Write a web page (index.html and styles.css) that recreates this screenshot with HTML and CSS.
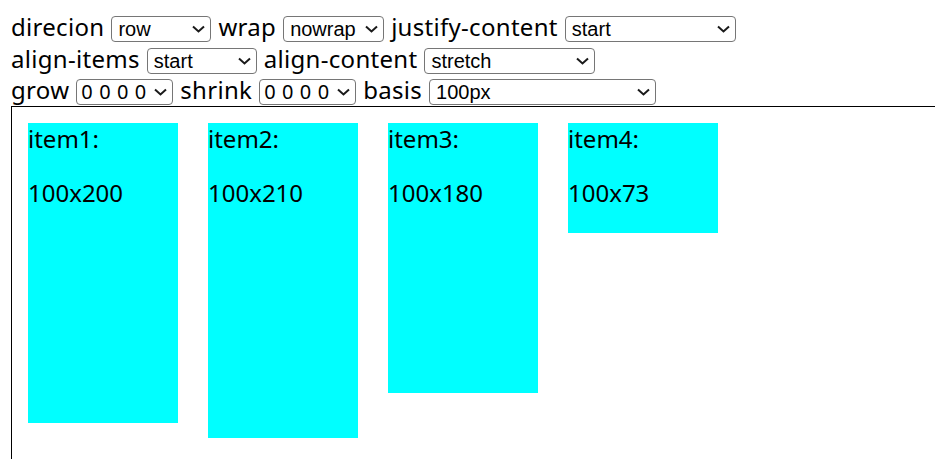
FILE: index.html
```html
<!DOCTYPE html>
<html>
<head>
<meta charset="utf-8">
<link rel="stylesheet" href="styles.css">
</head>
<body>
<div class="controls">
  <div class="row">
    <span class="label">direcion</span>
    <span class="selwrap"><select class="sel w100"><option>row</option></select><svg class="chev" width="13" height="8" viewBox="0 0 13 8"><path d="M1 1.5 L6.5 6.5 L12 1.5" fill="none" stroke="#1a1a1a" stroke-width="2"/></svg></span>
    <span class="label">wrap</span>
    <span class="selwrap"><select class="sel w101"><option>nowrap</option></select><svg class="chev" width="13" height="8" viewBox="0 0 13 8"><path d="M1 1.5 L6.5 6.5 L12 1.5" fill="none" stroke="#1a1a1a" stroke-width="2"/></svg></span>
    <span class="label">justify-content</span>
    <span class="selwrap"><select class="sel w171"><option>start</option></select><svg class="chev" width="13" height="8" viewBox="0 0 13 8"><path d="M1 1.5 L6.5 6.5 L12 1.5" fill="none" stroke="#1a1a1a" stroke-width="2"/></svg></span>
  </div>
  <div class="row">
    <span class="label">align-items</span>
    <span class="selwrap"><select class="sel w110"><option>start</option></select><svg class="chev" width="13" height="8" viewBox="0 0 13 8"><path d="M1 1.5 L6.5 6.5 L12 1.5" fill="none" stroke="#1a1a1a" stroke-width="2"/></svg></span>
    <span class="label">align-content</span>
    <span class="selwrap"><select class="sel w171"><option>stretch</option></select><svg class="chev" width="13" height="8" viewBox="0 0 13 8"><path d="M1 1.5 L6.5 6.5 L12 1.5" fill="none" stroke="#1a1a1a" stroke-width="2"/></svg></span>
  </div>
  <div class="row">
    <span class="label">grow</span>
    <span class="selwrap"><select class="sel w97 digits"><option>0 0 0 0</option></select><svg class="chev" width="13" height="8" viewBox="0 0 13 8"><path d="M1 1.5 L6.5 6.5 L12 1.5" fill="none" stroke="#1a1a1a" stroke-width="2"/></svg></span>
    <span class="label">shrink</span>
    <span class="selwrap"><select class="sel w97 digits"><option>0 0 0 0</option></select><svg class="chev" width="13" height="8" viewBox="0 0 13 8"><path d="M1 1.5 L6.5 6.5 L12 1.5" fill="none" stroke="#1a1a1a" stroke-width="2"/></svg></span>
    <span class="label">basis</span>
    <span class="selwrap"><select class="sel w227"><option>100px</option></select><svg class="chev" width="13" height="8" viewBox="0 0 13 8"><path d="M1 1.5 L6.5 6.5 L12 1.5" fill="none" stroke="#1a1a1a" stroke-width="2"/></svg></span>
  </div>
</div>
<div class="box">
  <div class="item h300"><div class="name">item1:</div><div class="size">100x200</div></div>
  <div class="item h315"><div class="name">item2:</div><div class="size">100x210</div></div>
  <div class="item h270"><div class="name">item3:</div><div class="size">100x180</div></div>
  <div class="item h110"><div class="name">item4:</div><div class="size">100x73</div></div>
</div>
</body>
</html>
```

FILE: styles.css
```css
html, body {
  margin: 0;
  padding: 0;
  height: 100%;
  overflow: hidden;
  background: #fff;
}
body {
  box-sizing: border-box;
  padding: 11px 0 0 11px;
  display: flex;
  flex-direction: column;
  font-family: "Noto Sans", "Open Sans", sans-serif;
  font-size: 24px;
  color: #000;
}
.controls {
  display: flex;
  flex-direction: column;
  flex: none;
}
.row {
  display: flex;
  align-items: baseline;
  gap: 7px;
  height: 31.7px;
  line-height: 31.7px;
  white-space: nowrap;
}
.label {
  display: inline-block;
  letter-spacing: 0.3px;
}
.selwrap {
  position: relative;
  display: inline-flex;
}
.sel {
  appearance: none;
  -webkit-appearance: none;
  height: 26px;
  box-sizing: border-box;
  border: 1px solid #767676;
  border-radius: 4px;
  background: #fff;
  color: #000;
  font-family: "Liberation Sans", Arial, sans-serif;
  font-size: 20px;
  line-height: 24px;
  padding: 0 0 0 6px;
  margin: 0;
}
.digits {
  font-family: "Noto Sans", sans-serif;
  font-size: 20px;
  letter-spacing: 0.6px;
  padding-left: 4px;
}
.chev {
  position: absolute;
  right: 6px;
  top: 9px;
  pointer-events: none;
}
.w97 { width: 97px; }
.w100 { width: 100px; }
.w101 { width: 101px; }
.w110 { width: 110px; }
.w171 { width: 171px; }
.w227 { width: 227px; }

.box {
  flex: 1;
  box-sizing: border-box;
  border-top: 1px solid #000;
  border-left: 1px solid #000;
  padding: 16px 0 0 16px;
  display: flex;
  align-items: flex-start;
  gap: 30px;
  overflow: hidden;
}
.item {
  width: 150px;
  flex: none;
  background: #00ffff;
  line-height: 32px;
}
.size {
  margin-top: 22px;
}
.h300 { height: 300px; }
.h315 { height: 315px; }
.h270 { height: 270px; }
.h110 { height: 110px; }
```
